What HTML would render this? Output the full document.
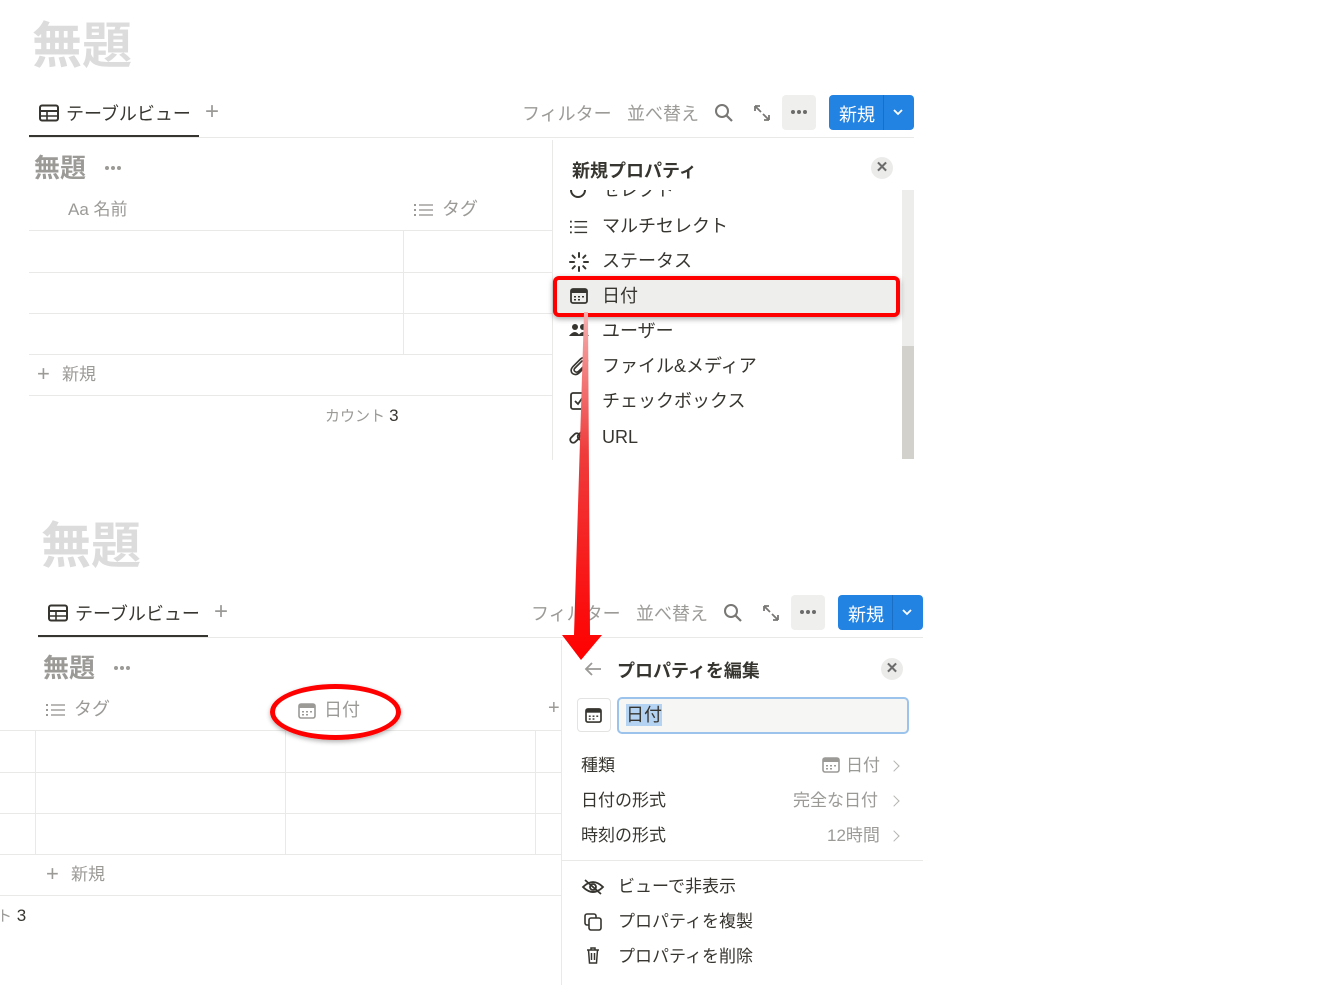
<!DOCTYPE html>
<html><head><meta charset="utf-8"><style>
*{margin:0;padding:0;box-sizing:border-box}
body{width:1344px;height:1000px;background:#fff;position:relative;overflow:hidden;font-family:"Liberation Sans","Noto Sans CJK JP",sans-serif;color:#37352f}
.a{position:absolute;white-space:nowrap}
.t{font-size:50px;font-weight:bold;color:#dcdcdc;line-height:1}
.g{color:#9b9a97}
.hl{position:absolute;height:1px;background:#e9e9e7}
.vl{position:absolute;width:1px;background:#e9e9e7}
.f18{font-size:18px;line-height:22px}
.f17{font-size:17px;line-height:22px}
.btn{position:absolute;background:#2383e2;border-radius:4px;color:#fff;font-size:18px}
.cls{position:absolute;width:22px;height:22px;border-radius:50%;background:#ebebea;color:#6b6b6b;font-size:15px;text-align:center;line-height:22px;font-weight:bold}
.dots{position:absolute;width:20px;height:6px}
.dots i{position:absolute;top:0;width:4px;height:4px;border-radius:50%;background:#9b9a97}
svg{position:absolute}
.chev{position:absolute;width:8px;height:8px;border-right:1.6px solid #b5b4b1;border-top:1.6px solid #b5b4b1;transform:rotate(45deg)}
</style></head><body>

<!-- TOP -->
<div class="a t" style="left:32px;top:21px">無題</div>
<svg style="left:39px;top:104px" width="20" height="18" viewBox="0 0 20 18"><rect x="1" y="1.5" width="18" height="15" rx="2" fill="none" stroke="#37352f" stroke-width="2"/><line x1="1" y1="7" x2="19" y2="7" stroke="#37352f" stroke-width="2"/><line x1="1" y1="12" x2="19" y2="12" stroke="#37352f" stroke-width="1.6"/><line x1="8" y1="7" x2="8" y2="16" stroke="#37352f" stroke-width="1.6"/></svg>
<div class="a f18" style="left:66px;top:103px">テーブルビュー</div>
<div class="a g" style="left:205px;top:98px;font-size:24px;font-weight:300">+</div>
<div style="position:absolute;left:29px;top:135px;width:170px;height:3px;background:#37352f"></div>
<div class="hl" style="left:29px;top:137px;width:885px"></div>
<div class="a g f18" style="left:522px;top:103px">フィルター</div>
<div class="a g f18" style="left:627px;top:103px">並べ替え</div>
<svg style="left:714px;top:103px" width="20" height="20" viewBox="0 0 20 20"><circle cx="8" cy="8" r="6" fill="none" stroke="#787774" stroke-width="2"/><line x1="12.5" y1="12.5" x2="18" y2="18" stroke="#787774" stroke-width="2.2"/></svg>
<svg style="left:753px;top:104px" width="18" height="18" viewBox="0 0 18 18"><path d="M2 2 L8 8 M2 2 L2 7 M2 2 L7 2 M16 16 L10 10 M16 16 L16 11 M16 16 L11 16" stroke="#787774" stroke-width="1.8" fill="none"/></svg>
<div style="position:absolute;left:782px;top:95px;width:34px;height:35px;background:#efefee;border-radius:4px"><div class="dots" style="left:9px;top:15px"><i style="left:0;background:#6b6b6b"></i><i style="left:6px;background:#6b6b6b"></i><i style="left:12px;background:#6b6b6b"></i></div></div>
<div class="btn" style="left:829px;top:95px;width:85px;height:35px"><span class="a" style="left:10px;top:6px">新規</span><div style="position:absolute;left:54px;top:0;width:1px;height:35px;background:#1a6fc4"></div><svg style="left:63px;top:12px" width="12" height="10" viewBox="0 0 12 10"><path d="M2 3 L6 7 L10 3" stroke="#fff" stroke-width="1.8" fill="none"/></svg></div>

<div class="a" style="left:34px;top:153px;font-size:26px;line-height:30px;font-weight:bold;color:#9b9a97">無題</div>
<div class="dots" style="left:105px;top:166px"><i style="left:0"></i><i style="left:6px"></i><i style="left:12px"></i></div>
<div class="a g f17" style="left:68px;top:199px">Aa 名前</div>
<svg style="left:414px;top:202px" width="20" height="16" viewBox="0 0 20 16"><g fill="#9b9a97"><rect x="0" y="2" width="2" height="2"/><rect x="0" y="7" width="2" height="2"/><rect x="0" y="12" width="2" height="2"/><rect x="5" y="2.3" width="14" height="1.4"/><rect x="5" y="7.3" width="14" height="1.4"/><rect x="5" y="12.3" width="14" height="1.4"/></g></svg>
<div class="a g f18" style="left:442px;top:198px">タグ</div>
<div class="hl" style="left:29px;top:230px;width:523px"></div>
<div class="hl" style="left:29px;top:272px;width:523px"></div>
<div class="hl" style="left:29px;top:313px;width:523px"></div>
<div class="hl" style="left:29px;top:354px;width:523px"></div>
<div class="hl" style="left:29px;top:395px;width:523px"></div>
<div class="vl" style="left:403px;top:231px;height:123px"></div>
<div class="a g" style="left:37px;top:361px;font-size:22px;font-weight:300">+</div>
<div class="a g f17" style="left:62px;top:364px">新規</div>
<div class="a g" style="left:325px;top:405px;font-size:15px">カウント <span style="color:#37352f;font-size:17px">3</span></div>

<div class="vl" style="left:552px;top:140px;height:320px"></div>
<div class="a" style="left:572px;top:157px;font-size:18px;font-weight:bold">新規プロパティ</div>
<div class="cls" style="left:871px;top:157px">✕</div>
<div style="position:absolute;left:902px;top:190px;width:12px;height:156px;background:#ededeb"></div>
<div style="position:absolute;left:902px;top:346px;width:12px;height:113px;background:#d3d1cb"></div>
<div style="position:absolute;left:553px;top:190px;width:349px;height:12px;overflow:hidden"><div class="a f18" style="left:49px;top:-11px">セレクト</div><div class="a" style="left:17px;top:-8px;width:16px;height:16px;border:2px solid #37352f;border-radius:50%"></div></div>
<svg style="left:570px;top:219px" width="18" height="16" viewBox="0 0 20 16"><g fill="#37352f"><rect x="0" y="1" width="2" height="2"/><rect x="0" y="7" width="2" height="2"/><rect x="0" y="13" width="2" height="2"/><rect x="5" y="1.3" width="14" height="1.5"/><rect x="5" y="7.3" width="14" height="1.5"/><rect x="5" y="13.3" width="14" height="1.5"/></g></svg>
<div class="a f18" style="left:602px;top:215px">マルチセレクト</div>
<svg style="left:569px;top:252px" width="20" height="20" viewBox="0 0 20 20"><g stroke="#37352f" stroke-width="2" stroke-linecap="round"><line x1="10" y1="1" x2="10" y2="5"/><line x1="10" y1="15" x2="10" y2="19"/><line x1="1" y1="10" x2="5" y2="10"/><line x1="15" y1="10" x2="19" y2="10"/><line x1="3.6" y1="3.6" x2="5.8" y2="5.8"/><line x1="14.2" y1="14.2" x2="16.4" y2="16.4"/><line x1="16.4" y1="3.6" x2="14.2" y2="5.8"/><line x1="3.6" y1="16.4" x2="5.8" y2="14.2"/></g></svg>
<div class="a f18" style="left:602px;top:250px">ステータス</div>
<div style="position:absolute;left:553px;top:276px;width:347px;height:41px;border:4px solid #f00;border-radius:6px;background:#eeeeed;box-shadow:0 2px 6px rgba(0,0,0,.35)"></div>
<svg style="left:570px;top:288px" width="18" height="16" viewBox="0 0 18 16"><rect x="1" y="1" width="16" height="14" rx="2" fill="none" stroke="#37352f" stroke-width="1.8"/><rect x="1" y="1" width="16" height="4" fill="#37352f"/><g fill="#37352f"><rect x="4" y="8" width="2" height="1.5"/><rect x="8" y="8" width="2" height="1.5"/><rect x="12" y="8" width="2" height="1.5"/><rect x="4" y="11" width="2" height="1.5"/><rect x="8" y="11" width="2" height="1.5"/></g></svg>
<div class="a f18" style="left:602px;top:285px">日付</div>
<svg style="left:569px;top:323px" width="20" height="14" viewBox="0 0 20 14"><circle cx="6" cy="4" r="3" fill="#37352f"/><circle cx="14" cy="4" r="3" fill="#37352f"/><path d="M0 13 Q6 5 11 13Z M9 13 Q14 5 20 13Z" fill="#37352f"/></svg>
<div class="a f18" style="left:602px;top:320px">ユーザー</div>
<svg style="left:569px;top:356px" width="20" height="20" viewBox="0 0 20 20"><path d="M13 5 L6 12 Q4 14 6 15.5 Q8 17 10 15 L17 8 Q20 4.5 17 2.5 Q14 0.5 11 3.5 L4 10.5 Q0.5 14.5 3.5 17.5 Q7 20 10.5 16.5 L16 11" fill="none" stroke="#37352f" stroke-width="1.6" stroke-linecap="round"/></svg>
<div class="a f18" style="left:602px;top:355px">ファイル&amp;メディア</div>
<svg style="left:570px;top:392px" width="18" height="18" viewBox="0 0 18 18"><rect x="1" y="1" width="16" height="16" rx="2" fill="none" stroke="#37352f" stroke-width="1.8"/><path d="M5 9 L8 12 L13 5" stroke="#37352f" stroke-width="1.8" fill="none"/></svg>
<div class="a f18" style="left:602px;top:390px">チェックボックス</div>
<svg style="left:569px;top:427px" width="20" height="20" viewBox="0 0 20 20"><rect x="0.5" y="8" width="11" height="6" rx="3" transform="rotate(-45 6 11)" fill="none" stroke="#37352f" stroke-width="1.8"/><rect x="8" y="5" width="11" height="6" rx="3" transform="rotate(-45 13.5 8)" fill="none" stroke="#37352f" stroke-width="1.8"/></svg>
<div class="a f18" style="left:602px;top:426px">URL</div>

<!-- BOTTOM -->
<div class="a t" style="left:41px;top:521px">無題</div>
<svg style="left:48px;top:604px" width="20" height="18" viewBox="0 0 20 18"><rect x="1" y="1.5" width="18" height="15" rx="2" fill="none" stroke="#37352f" stroke-width="2"/><line x1="1" y1="7" x2="19" y2="7" stroke="#37352f" stroke-width="2"/><line x1="1" y1="12" x2="19" y2="12" stroke="#37352f" stroke-width="1.6"/><line x1="8" y1="7" x2="8" y2="16" stroke="#37352f" stroke-width="1.6"/></svg>
<div class="a f18" style="left:75px;top:603px">テーブルビュー</div>
<div class="a g" style="left:214px;top:598px;font-size:24px;font-weight:300">+</div>
<div style="position:absolute;left:38px;top:635px;width:170px;height:3px;background:#37352f"></div>
<div class="hl" style="left:38px;top:637px;width:885px"></div>
<div class="a g f18" style="left:531px;top:603px">フィルター</div>
<div class="a g f18" style="left:636px;top:603px">並べ替え</div>
<svg style="left:723px;top:603px" width="20" height="20" viewBox="0 0 20 20"><circle cx="8" cy="8" r="6" fill="none" stroke="#787774" stroke-width="2"/><line x1="12.5" y1="12.5" x2="18" y2="18" stroke="#787774" stroke-width="2.2"/></svg>
<svg style="left:762px;top:604px" width="18" height="18" viewBox="0 0 18 18"><path d="M2 2 L8 8 M2 2 L2 7 M2 2 L7 2 M16 16 L10 10 M16 16 L16 11 M16 16 L11 16" stroke="#787774" stroke-width="1.8" fill="none"/></svg>
<div style="position:absolute;left:791px;top:595px;width:34px;height:35px;background:#efefee;border-radius:4px"><div class="dots" style="left:9px;top:15px"><i style="left:0;background:#6b6b6b"></i><i style="left:6px;background:#6b6b6b"></i><i style="left:12px;background:#6b6b6b"></i></div></div>
<div class="btn" style="left:838px;top:595px;width:85px;height:35px"><span class="a" style="left:10px;top:6px">新規</span><div style="position:absolute;left:54px;top:0;width:1px;height:35px;background:#1a6fc4"></div><svg style="left:63px;top:12px" width="12" height="10" viewBox="0 0 12 10"><path d="M2 3 L6 7 L10 3" stroke="#fff" stroke-width="1.8" fill="none"/></svg></div>

<div class="a" style="left:43px;top:653px;font-size:26px;line-height:30px;font-weight:bold;color:#9b9a97">無題</div>
<div class="dots" style="left:114px;top:666px"><i style="left:0"></i><i style="left:6px"></i><i style="left:12px"></i></div>
<svg style="left:46px;top:702px" width="20" height="16" viewBox="0 0 20 16"><g fill="#9b9a97"><rect x="0" y="2" width="2" height="2"/><rect x="0" y="7" width="2" height="2"/><rect x="0" y="12" width="2" height="2"/><rect x="5" y="2.3" width="14" height="1.4"/><rect x="5" y="7.3" width="14" height="1.4"/><rect x="5" y="12.3" width="14" height="1.4"/></g></svg>
<div class="a g f18" style="left:74px;top:698px">タグ</div>
<svg style="left:298px;top:703px" width="18" height="16" viewBox="0 0 18 16"><rect x="1" y="1" width="16" height="14" rx="2" fill="none" stroke="#9b9a97" stroke-width="1.6"/><rect x="1" y="1" width="16" height="4" fill="#9b9a97"/><g fill="#9b9a97"><rect x="4" y="8" width="2" height="1.5"/><rect x="8" y="8" width="2" height="1.5"/><rect x="12" y="8" width="2" height="1.5"/><rect x="4" y="11" width="2" height="1.5"/><rect x="8" y="11" width="2" height="1.5"/></g></svg>
<div class="a g f18" style="left:324px;top:699px">日付</div>
<div class="a g" style="left:548px;top:697px;font-size:20px">+</div>
<div class="hl" style="left:0;top:730px;width:561px"></div>
<div class="hl" style="left:0;top:772px;width:561px"></div>
<div class="hl" style="left:0;top:813px;width:561px"></div>
<div class="hl" style="left:0;top:854px;width:561px"></div>
<div class="hl" style="left:0;top:895px;width:561px"></div>
<div class="vl" style="left:35px;top:731px;height:123px"></div>
<div class="vl" style="left:285px;top:731px;height:123px"></div>
<div class="vl" style="left:535px;top:731px;height:123px"></div>
<div class="a g" style="left:46px;top:861px;font-size:22px;font-weight:300">+</div>
<div class="a g f17" style="left:71px;top:864px">新規</div>
<div class="a" style="left:-3px;top:905px;font-size:17px"><span style="color:#9b9a97;font-size:15px">ト</span> 3</div>
<div style="position:absolute;left:270px;top:684px;width:131px;height:56px;border:5px solid #f00;border-radius:50%;box-shadow:0 2px 5px rgba(0,0,0,.3)"></div>

<div class="vl" style="left:561px;top:640px;height:345px"></div>
<svg style="left:584px;top:661px" width="18" height="16" viewBox="0 0 18 16"><path d="M17 8 H2 M8 2 L2 8 L8 14" fill="none" stroke="#9b9a97" stroke-width="1.8"/></svg>
<div class="a" style="left:617px;top:657px;font-size:18px;font-weight:bold">プロパティを編集</div>
<div class="cls" style="left:881px;top:658px">✕</div>
<div style="position:absolute;left:577px;top:698px;width:34px;height:34px;border:1px solid #e3e3e1;border-radius:4px"></div>
<svg style="left:585px;top:708px" width="17" height="15" viewBox="0 0 18 16"><rect x="1" y="1" width="16" height="14" rx="2" fill="none" stroke="#37352f" stroke-width="1.8"/><rect x="1" y="1" width="16" height="4" fill="#37352f"/><g fill="#37352f"><rect x="4" y="8" width="2" height="1.5"/><rect x="8" y="8" width="2" height="1.5"/><rect x="12" y="8" width="2" height="1.5"/><rect x="4" y="11" width="2" height="1.5"/><rect x="8" y="11" width="2" height="1.5"/></g></svg>
<div style="position:absolute;left:617px;top:697px;width:292px;height:37px;border:2px solid #9cc3ec;border-radius:5px;background:#f6f6f4"></div>
<div class="a f18" style="left:626px;top:704px;background:#b4d2f1">日付</div>
<div class="a f17" style="left:581px;top:755px">種類</div>
<div class="a f17" style="left:581px;top:790px">日付の形式</div>
<div class="a f17" style="left:581px;top:825px">時刻の形式</div>
<svg style="left:822px;top:757px" width="18" height="16" viewBox="0 0 18 16"><rect x="1" y="1" width="16" height="14" rx="2" fill="none" stroke="#9b9a97" stroke-width="1.6"/><rect x="1" y="1" width="16" height="4" fill="#9b9a97"/><g fill="#9b9a97"><rect x="4" y="8" width="2" height="1.5"/><rect x="8" y="8" width="2" height="1.5"/><rect x="12" y="8" width="2" height="1.5"/><rect x="4" y="11" width="2" height="1.5"/><rect x="8" y="11" width="2" height="1.5"/></g></svg>
<div class="a g f17" style="left:846px;top:755px">日付</div>
<div class="a g f17" style="left:793px;top:790px">完全な日付</div>
<div class="a g f17" style="left:827px;top:825px">12時間</div>
<div class="chev" style="left:890px;top:762px"></div>
<div class="chev" style="left:890px;top:797px"></div>
<div class="chev" style="left:890px;top:832px"></div>
<div class="hl" style="left:562px;top:860px;width:361px"></div>
<svg style="left:581px;top:878px" width="24" height="18" viewBox="0 0 24 18"><path d="M2 9 Q12 -1 22 9 Q12 19 2 9Z" fill="none" stroke="#37352f" stroke-width="1.8"/><circle cx="12" cy="9" r="3" fill="none" stroke="#37352f" stroke-width="1.8"/><line x1="4" y1="2" x2="20" y2="16" stroke="#37352f" stroke-width="1.8"/></svg>
<div class="a f17" style="left:618px;top:876px">ビューで非表示</div>
<svg style="left:584px;top:913px" width="18" height="18" viewBox="0 0 18 18"><rect x="1" y="1" width="11" height="11" rx="2" fill="none" stroke="#37352f" stroke-width="1.6"/><rect x="5" y="5" width="12" height="12" rx="2" fill="#fff" stroke="#37352f" stroke-width="1.6"/></svg>
<div class="a f17" style="left:618px;top:911px">プロパティを複製</div>
<svg style="left:586px;top:947px" width="14" height="17" viewBox="0 0 14 17"><path d="M1 3 H13 M5 3 V1 H9 V3 M2.5 3 L3.5 16 H10.5 L11.5 3 M5.5 6 V13 M8.5 6 V13" fill="none" stroke="#37352f" stroke-width="1.5"/></svg>
<div class="a f17" style="left:618px;top:946px">プロパティを削除</div>

<!-- arrow -->
<svg style="left:555px;top:300px" width="60" height="365" viewBox="0 0 60 365"><defs><linearGradient id="ag" x1="0" y1="0" x2="0" y2="1"><stop offset="0" stop-color="#f6b0b0"/><stop offset=".4" stop-color="#ef3c3c"/><stop offset="1" stop-color="#ff0000"/></linearGradient></defs><path d="M29 12 L33 12 L35 335 L47 335 L26 360 L7 335 L19 335 Z" fill="url(#ag)"/></svg>
</body></html>
